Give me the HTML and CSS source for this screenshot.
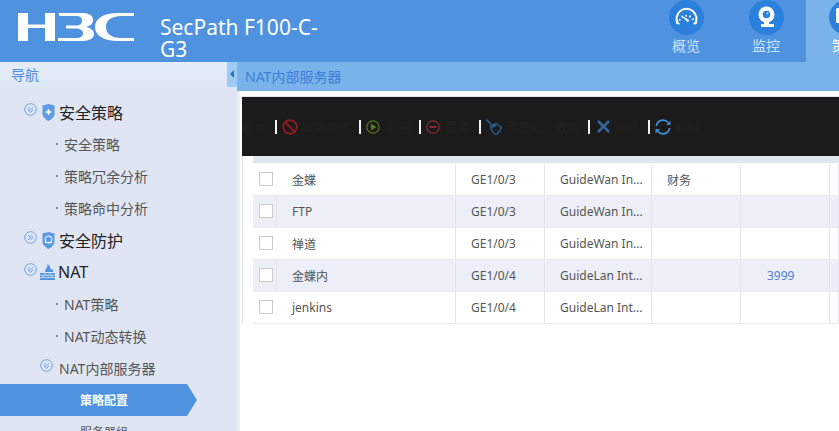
FILE: index.html
```html
<!DOCTYPE html>
<html lang="zh-CN">
<head>
    <meta charset="UTF-8">
    <title>SecPath F100-C-G3</title>
    <link rel="stylesheet" href="styles.css">
</head>
<body>
    <header class="topbar">
        <svg class="logo" viewBox="0 0 118 30" aria-label="H3C">
            <g transform="translate(-17 -12)" fill="#fff">
                <path d="M18 13H28V24.500H45V13H55V41H45V28H28V41H18Z"/>
                <path d="M59 13H82C90 13 93 16 93 20C93 24 90 26 86 27C90 27.500 94 30 94 34C94 38 90 41 82 41H58V38H76C81 38 83 36 83 33.500C83 30 80 28.500 76 28.500H66V25.500H76C80 25.500 82 23.500 82 20.500C82 17.500 80 16 76 16H59Z"/>
                <path d="M134 13V16H122C110 16 106 21 106 27C106 33 110 38 122 38H134V41H118C103 41 95 35 95 27C95 19 103 13 118 13Z"/>
            </g>
        </svg>
        <div class="product">SecPath F100-C-G3</div>
        <nav class="tabs">
            <a class="tab">
                <span class="tab-icon">
                    <svg viewBox="0 0 35 35" width="35" height="35">
                        <path d="M9 24A10 10 0 1 1 26 24" fill="none" stroke="#fff" stroke-width="2"/>
                        <path d="M10.500 20.500A7.500 7.500 0 0 1 24.500 20.500" fill="none" stroke="#fff" stroke-width="2" stroke-dasharray="1.500 2.400"/>
                        <path d="M11.500 15L20 20 19 22.500Z" fill="#fff"/>
                        <path d="M7 22.500L10.500 24M28 22.500L24.500 24" stroke="#fff" stroke-width="1.500"/>
                    </svg>
                </span>
                <span class="tab-label">概览</span>
            </a>
            <a class="tab">
                <span class="tab-icon">
                    <svg viewBox="0 0 35 35" width="35" height="35">
                        <circle cx="17.500" cy="14.500" r="8" fill="#fff"/>
                        <circle cx="17.500" cy="14.500" r="3.800" fill="#2b7fdd"/>
                        <circle cx="18.500" cy="13.500" r="1" fill="#bcd8f5"/>
                        <path d="M15 22h5v2.500h-5z" fill="#fff"/>
                        <rect x="12" y="24" width="13" height="3" rx="1" fill="#fff"/>
                    </svg>
                </span>
                <span class="tab-label">监控</span>
            </a>
            <a class="tab active">
                <span class="tab-icon">
                    <svg viewBox="0 0 35 35" width="35" height="35">
                        <rect x="7" y="8" width="21" height="15" rx="1.500" fill="#fff"/>
                    </svg>
                </span>
                <span class="tab-label">策略</span>
            </a>
        </nav>
    </header>

    <div class="content">
        <aside class="sidebar">
            <div class="nav-title">导航</div>
            <button class="collapse"></button>
            <ul class="tree">
                <li class="node">
                    <svg class="fold" viewBox="0 0 13 13"><circle cx="6.500" cy="6.500" r="5.800"/><path d="M4 4.500l2.500 2 2.500-2M4 7l2.500 2 2.500-2"/></svg>
                    <svg class="node-icon" viewBox="0 0 13 17"><path d="M0.500 1.500L6.500 0 12.500 1.500V10C12.500 13 9 15.500 6.500 17 4 15.500 0.500 13 0.500 10Z" fill="#5d9ae2"/><path d="M6.500 5V11M3.500 8H9.500" stroke="#fff" stroke-width="1.600"/></svg>
                    安全策略
                </li>
                <li class="leaf"><i></i>安全策略</li>
                <li class="leaf"><i></i>策略冗余分析</li>
                <li class="leaf"><i></i>策略命中分析</li>
                <li class="node">
                    <svg class="fold" viewBox="0 0 13 13"><circle cx="6.500" cy="6.500" r="5.800"/><path d="M4 4l2.500 2.500L4 9M6.500 4L9 6.500 6.500 9"/></svg>
                    <svg class="node-icon" viewBox="0 0 13 17"><path d="M0.500 1.500L6.500 0 12.500 1.500V10C12.500 13 9 15.500 6.500 17 4 15.500 0.500 13 0.500 10Z" fill="#5d9ae2"/><circle cx="6.500" cy="7.500" r="3.500" fill="none" stroke="#fff"/><path d="M3 10.500h7" stroke="#fff"/></svg>
                    安全防护
                </li>
                <li class="node">
                    <svg class="fold" viewBox="0 0 13 13"><circle cx="6.500" cy="6.500" r="5.800"/><path d="M4 4.500l2.500 2 2.500-2M4 7l2.500 2 2.500-2"/></svg>
                    <svg class="node-icon wall" viewBox="0 0 17 16"><path d="M6 8C6 5 9 4 8.500 0 11 2 12 4 11.500 6 12.500 6 13 5 13 4.500 14 6 14 7 14 8Z" fill="#4f92e0"/><path d="M1 9H16V16H1Z" fill="#4f92e0"/><path d="M1 11.200H16M1 13.600H16M6 9V11.200M11 9V11.200M4 11.200V13.600M9 11.200V13.600M13 11.200V13.600" stroke="#dfe5f2" stroke-width="0.800"/></svg>
                    NAT
                </li>
                <li class="leaf"><i></i>NAT策略</li>
                <li class="leaf"><i></i>NAT动态转换</li>
                <li class="branch">
                    <svg class="fold" viewBox="0 0 13 13"><circle cx="6.500" cy="6.500" r="5.800"/><path d="M4 4.500l2.500 2 2.500-2M4 7l2.500 2 2.500-2"/></svg>
                    NAT内部服务器
                </li>
                <li class="sub current"><i></i>策略配置</li>
                <li class="sub"><i></i>服务器组</li>
            </ul>
        </aside>

        <main class="main">
            <div class="page-title">NAT内部服务器</div>
            <div class="panel">
                <div class="toolbar">
                    <span class="tool-text">统计</span>
                    <b class="sep"></b>
                    <svg class="tool-icon" viewBox="0 0 16 16"><circle cx="8" cy="8" r="6.800" fill="none" stroke="#8b1a1f" stroke-width="2"/><path d="M3.500 3.500L12.500 12.500" stroke="#8b1a1f" stroke-width="2.200"/></svg>
                    <span class="tool-text">取消统计</span>
                    <b class="sep"></b>
                    <svg class="tool-icon small" viewBox="0 0 14 14"><circle cx="7" cy="7" r="6.200" fill="none" stroke="#4f7d16" stroke-width="1.200"/><path d="M5 3.500L10.500 7 5 10.500Z" fill="#4f7d16"/></svg>
                    <span class="tool-text">启用</span>
                    <b class="sep"></b>
                    <svg class="tool-icon small" viewBox="0 0 14 14"><circle cx="7" cy="7" r="6.200" fill="none" stroke="#8c2b30" stroke-width="1.200"/><path d="M3.500 7H10.500" stroke="#8c2b30" stroke-width="2"/></svg>
                    <span class="tool-text">禁用</span>
                    <b class="sep"></b>
                    <svg class="tool-icon brush" viewBox="0 0 16 16"><path d="M0.500 0.500L6 6.500" stroke="#2d5a8c" stroke-width="1.800"/><path d="M4.500 7L10 4.500 15.500 8.500C14 12 12 14.500 9.500 15.500 7 13.500 5 10.500 4.500 7Z" fill="none" stroke="#2d5a8c" stroke-width="1.500"/><path d="M6 8L10 6" stroke="#2d5a8c" stroke-width="2"/></svg>
                    <span class="tool-text">清空统计数据</span>
                    <b class="sep"></b>
                    <svg class="tool-icon x" viewBox="0 0 13 13"><path d="M1 1L12 12M12 1L1 12" stroke="#35649b" stroke-width="2.600"/></svg>
                    <span class="tool-text">删除</span>
                    <b class="sep"></b>
                    <svg class="tool-icon" viewBox="0 0 16 16"><path d="M1.500 7A6.500 6.500 0 0 1 13 3.500" fill="none" stroke="#3f8edb" stroke-width="1.800"/><path d="M14.500 9A6.500 6.500 0 0 1 3 12.500" fill="none" stroke="#3f8edb" stroke-width="1.800"/><path d="M15.500 1.500V6H11ZM0.500 14.500V10H5Z" fill="#3f8edb"/></svg>
                    <span class="tool-text">刷新</span>
                </div>
                <div class="strip"></div>
                <table class="grid">
                    <colgroup>
                        <col class="c-check"><col class="c-name"><col class="c-if"><col class="c-zone"><col class="c-if"><col class="c-if"><col>
                    </colgroup>
                    <tbody>
                        <tr>
                            <td class="check"><span class="box"></span></td><td>金蝶</td><td>GE1/0/3</td><td>GuideWan In...</td><td>财务</td><td></td><td></td>
                        </tr>
                        <tr>
                            <td class="check"><span class="box"></span></td><td>FTP</td><td>GE1/0/3</td><td>GuideWan In...</td><td></td><td></td><td></td>
                        </tr>
                        <tr>
                            <td class="check"><span class="box"></span></td><td>禅道</td><td>GE1/0/3</td><td>GuideWan In...</td><td></td><td></td><td></td>
                        </tr>
                        <tr>
                            <td class="check"><span class="box"></span></td><td>金蝶内</td><td>GE1/0/4</td><td>GuideLan Int...</td><td></td><td class="port">3999</td><td></td>
                        </tr>
                        <tr>
                            <td class="check"><span class="box"></span></td><td>jenkins</td><td>GE1/0/4</td><td>GuideLan Int...</td><td></td><td></td><td></td>
                        </tr>
                    </tbody>
                </table>
            </div>
        </main>
    </div>
</body>
</html>
```

FILE: styles.css
```css
html, body {
    height: 100%;
}
body {
    margin: 0;
    overflow: hidden;
    display: flex;
    flex-direction: column;
    background: #fff;
    font-family: "Noto Sans", "Noto Sans CJK SC", sans-serif;
    font-size: 12px;
    color: #555;
}

/* top bar */
.topbar {
    flex: none;
    height: 62px;
    display: flex;
    background: #4f92e0;
    overflow: hidden;
}
.logo {
    flex: none;
    width: 118px;
    height: 30px;
    margin: 12px 0 0 17px;
}
.product {
    flex: none;
    width: 170px;
    margin: 16px 0 0 25px;
    font-size: 21px;
    line-height: 22px;
    color: #fff;
}
.tabs {
    flex: none;
    display: flex;
    margin-left: 316px;
}
.tab {
    width: 80px;
    height: 62px;
    display: flex;
    flex-direction: column;
    align-items: center;
    color: #cfe2f7;
    font-size: 14px;
}
.tab.active {
    background: #7ab2ea;
    color: #fff;
}
.tab-icon {
    width: 35px;
    height: 35px;
    border-radius: 50%;
    background: #2b7fdd;
}
.tab-icon svg {
    display: block;
}
.tab-label {
    margin-top: 1px;
    line-height: 20px;
}

/* sidebar */
.content {
    flex: 1;
    min-height: 0;
    display: flex;
    position: relative;
}
.sidebar {
    flex: none;
    width: 237px;
    background: #dfe5f2;
    border-right: 3px solid #eceff8;
}
.nav-title {
    height: 26px;
    padding-left: 11px;
    line-height: 26px;
    font-size: 14px;
    color: #4a8fe0;
    background: linear-gradient(#e3ecf9, #dfe7f5);
}
.collapse {
    position: absolute;
    left: 227px;
    top: 0;
    width: 10px;
    height: 25px;
    padding: 0;
    border: 0;
    background: #9ccbf5;
}
.collapse::after {
    content: "";
    position: absolute;
    left: 3px;
    top: 8px;
    border: 4px solid transparent;
    border-left: 0;
    border-right: 4px solid #2670c4;
}
.tree {
    list-style: none;
    margin: 8px 0 0;
    padding: 0;
}
.tree li {
    height: 32px;
    display: flex;
    align-items: center;
    white-space: nowrap;
}
.tree .node {
    padding-left: 24px;
    font-size: 16px;
    color: #222;
}
.tree .leaf {
    padding-left: 56px;
    font-size: 14px;
    color: #555;
}
.tree .branch {
    padding-left: 40px;
    font-size: 14px;
    color: #555;
}
.tree .sub {
    padding-left: 72px;
    color: #555;
}
.tree .current {
    width: 197px;
    box-sizing: border-box;
    background: #4f92e0;
    color: #fff;
    font-weight: bold;
    clip-path: polygon(0 0, 187px 0, 100% 50%, 187px 100%, 0 100%);
}
.tree li i {
    flex: none;
    width: 2px;
    height: 2px;
    margin-right: 6px;
    background: #4f92e0;
}
.fold {
    flex: none;
    width: 13px;
    height: 13px;
    margin: -6px 5px 0 0;
    fill: none;
    stroke: #6aa3e6;
    stroke-width: 1;
}
.node-icon {
    flex: none;
    width: 13px;
    height: 17px;
    margin-right: 4px;
}
.node-icon.wall {
    width: 17px;
    height: 16px;
    margin-left: -3px;
    margin-right: 2px;
}
.branch .fold {
    margin-right: 6px;
}

/* main area */
.main {
    flex: 1;
    min-width: 0;
    display: flex;
    flex-direction: column;
    margin-left: -3px;
}
.page-title {
    flex: none;
    height: 29px;
    padding-left: 8px;
    line-height: 29px;
    font-size: 14px;
    color: #3b7fd8;
    background: #7ab2ea;
}
.panel {
    margin: 5px 0 0 5px;
    border-left: 1px solid #e6e6f2;
    border-top: 1px solid #e6e6f2;
}
.toolbar {
    height: 59px;
    display: flex;
    align-items: center;
    overflow: hidden;
    background: #1b1b1b;
    margin-left: -1px;
}
.tool-text {
    color: #212121;
    white-space: nowrap;
}
.sep {
    flex: none;
    width: 2px;
    height: 14px;
    margin: 0 5px 0 9px;
    background: #f2f2f2;
}
.tool-icon {
    flex: none;
    width: 16px;
    height: 16px;
    margin-right: 4px;
}
.tool-icon.small {
    width: 14px;
    height: 14px;
    margin-right: 6px;
}
.tool-icon.brush {
    margin-right: 5px;
}
.tool-icon.x {
    width: 13px;
    height: 13px;
    margin-left: 2px;
    margin-right: 5px;
}
.strip {
    height: 7px;
    margin-left: 10px;
    background: #e0e7ef;
}

/* table */
.grid {
    width: 586px;
    margin: 1px 0 0 10px;
    border-collapse: separate;
    border-spacing: 0;
    table-layout: fixed;
}
.c-check { width: 24px; }
.c-name { width: 179px; }
.c-if { width: 89px; }
.c-zone { width: 107px; }
.grid td {
    box-sizing: border-box;
    height: 32px;
    padding: 0 0 0 15px;
    border-right: 1px solid #e4e6ea;
    border-bottom: 1px solid #e8eaee;
    white-space: nowrap;
    overflow: hidden;
}
.grid tr:nth-child(even) td {
    background: #eceff7;
}
.grid td.check {
    padding: 0 0 0 6px;
    border-right: 0;
}
.grid tr:nth-child(even) td.check {
    border-right: 1px solid #e4e6ea;
}
.box {
    display: block;
    width: 12px;
    height: 12px;
    margin-top: -2px;
    border: 1px solid #ccc;
    background: #fff;
}
.grid td.port {
    padding-left: 26px;
    color: #4a80dc;
}
```
